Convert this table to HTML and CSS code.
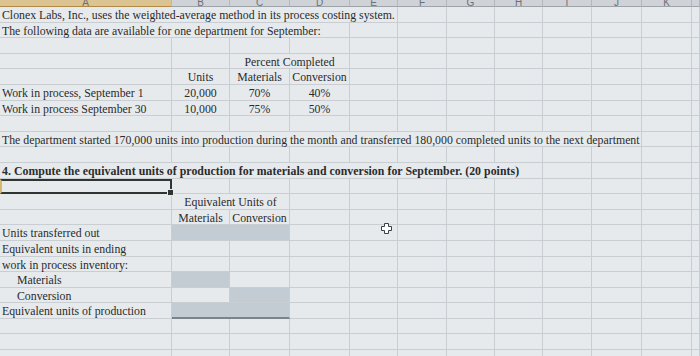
FILE: index.html
```html
<!DOCTYPE html>
<html lang="en">
<head>
    <meta charset="UTF-8">
    <meta content="width=device-width, initial-scale=1.0" name="viewport">
    <title>Process Costing - Equivalent Units</title>
    <link rel="stylesheet" href="styles.css">
</head>
<body>

<div class="sheet">
    <!-- Column headers (cut off at the top of the window) -->
    <div class="head active"><span>A</span></div>
    <div class="head"><span>B</span></div>
    <div class="head"><span>C</span></div>
    <div class="head"><span>D</span></div>
    <div class="head"><span>E</span></div>
    <div class="head"><span>F</span></div>
    <div class="head"><span>G</span></div>
    <div class="head"><span>H</span></div>
    <div class="head"><span>I</span></div>
    <div class="head"><span>J</span></div>
    <div class="head"><span>K</span></div>
    <div class="head"></div>

    <!-- Row 1-2: problem text -->
    <div class="cell span5">Clonex Labs, Inc., uses the weighted-average method in its process costing system.</div>
    <div class="cell"></div><div class="cell"></div><div class="cell"></div><div class="cell"></div><div class="cell"></div><div class="cell"></div><div class="cell"></div>

    <div class="cell span4">The following data are available for one department for September:</div>
    <div class="cell"></div><div class="cell"></div><div class="cell"></div><div class="cell"></div><div class="cell"></div><div class="cell"></div><div class="cell"></div><div class="cell"></div>

    <div class="cell"></div><div class="cell"></div><div class="cell"></div><div class="cell"></div><div class="cell"></div><div class="cell"></div><div class="cell"></div><div class="cell"></div><div class="cell"></div><div class="cell"></div><div class="cell"></div><div class="cell"></div>

    <!-- Data table -->
    <div class="cell"></div>
    <div class="cell"></div>
    <div class="cell span2 center">Percent Completed</div>
    <div class="cell"></div><div class="cell"></div><div class="cell"></div><div class="cell"></div><div class="cell"></div><div class="cell"></div><div class="cell"></div><div class="cell"></div>

    <div class="cell"></div>
    <div class="cell center">Units</div>
    <div class="cell center">Materials</div>
    <div class="cell center">Conversion</div>
    <div class="cell"></div><div class="cell"></div><div class="cell"></div><div class="cell"></div><div class="cell"></div><div class="cell"></div><div class="cell"></div><div class="cell"></div>

    <div class="cell">Work in process, September 1</div>
    <div class="cell center">20,000</div>
    <div class="cell center">70%</div>
    <div class="cell center">40%</div>
    <div class="cell"></div><div class="cell"></div><div class="cell"></div><div class="cell"></div><div class="cell"></div><div class="cell"></div><div class="cell"></div><div class="cell"></div>

    <div class="cell">Work in process September 30</div>
    <div class="cell center">10,000</div>
    <div class="cell center">75%</div>
    <div class="cell center">50%</div>
    <div class="cell"></div><div class="cell"></div><div class="cell"></div><div class="cell"></div><div class="cell"></div><div class="cell"></div><div class="cell"></div><div class="cell"></div>

    <div class="cell"></div><div class="cell"></div><div class="cell"></div><div class="cell"></div><div class="cell"></div><div class="cell"></div><div class="cell"></div><div class="cell"></div><div class="cell"></div><div class="cell"></div><div class="cell"></div><div class="cell"></div>

    <div class="cell span10">The department started 170,000 units into production during the month and transferred 180,000 completed units to the next department</div>
    <div class="cell"></div><div class="cell"></div>

    <div class="cell"></div><div class="cell"></div><div class="cell"></div><div class="cell"></div><div class="cell"></div><div class="cell"></div><div class="cell"></div><div class="cell"></div><div class="cell"></div><div class="cell"></div><div class="cell"></div><div class="cell"></div>

    <!-- Question -->
    <div class="cell span8 bold">4. Compute the equivalent units of production for materials and conversion for September. (20 points)</div>
    <div class="cell"></div><div class="cell"></div><div class="cell"></div><div class="cell"></div>

    <div class="cell selected"></div>
    <div class="cell"></div><div class="cell"></div><div class="cell"></div><div class="cell"></div><div class="cell"></div><div class="cell"></div><div class="cell"></div><div class="cell"></div><div class="cell"></div><div class="cell"></div><div class="cell"></div>

    <!-- Answer table -->
    <div class="cell"></div>
    <div class="cell span2 center">Equivalent Units of</div>
    <div class="cell"></div><div class="cell"></div><div class="cell"></div><div class="cell"></div><div class="cell"></div><div class="cell"></div><div class="cell"></div><div class="cell"></div><div class="cell"></div>

    <div class="cell"></div>
    <div class="cell center">Materials</div>
    <div class="cell center">Conversion</div>
    <div class="cell"></div><div class="cell"></div><div class="cell"></div><div class="cell"></div><div class="cell"></div><div class="cell"></div><div class="cell"></div><div class="cell"></div><div class="cell"></div>

    <div class="cell">Units transferred out</div>
    <div class="cell span2 fill"></div>
    <div class="cell"></div><div class="cell"></div><div class="cell"></div><div class="cell"></div><div class="cell"></div><div class="cell"></div><div class="cell"></div><div class="cell"></div><div class="cell"></div>

    <div class="cell">Equivalent units in ending</div>
    <div class="cell"></div><div class="cell"></div><div class="cell"></div><div class="cell"></div><div class="cell"></div><div class="cell"></div><div class="cell"></div><div class="cell"></div><div class="cell"></div><div class="cell"></div><div class="cell"></div>

    <div class="cell">work in process inventory:</div>
    <div class="cell"></div><div class="cell"></div><div class="cell"></div><div class="cell"></div><div class="cell"></div><div class="cell"></div><div class="cell"></div><div class="cell"></div><div class="cell"></div><div class="cell"></div><div class="cell"></div>

    <div class="cell indent">Materials</div>
    <div class="cell fill"></div>
    <div class="cell"></div>
    <div class="cell"></div><div class="cell"></div><div class="cell"></div><div class="cell"></div><div class="cell"></div><div class="cell"></div><div class="cell"></div><div class="cell"></div><div class="cell"></div>

    <div class="cell indent">Conversion</div>
    <div class="cell"></div>
    <div class="cell fill"></div>
    <div class="cell"></div><div class="cell"></div><div class="cell"></div><div class="cell"></div><div class="cell"></div><div class="cell"></div><div class="cell"></div><div class="cell"></div><div class="cell"></div>

    <div class="cell">Equivalent units of production</div>
    <div class="cell span2 fill total"></div>
    <div class="cell"></div><div class="cell"></div><div class="cell"></div><div class="cell"></div><div class="cell"></div><div class="cell"></div><div class="cell"></div><div class="cell"></div><div class="cell"></div>

    <div class="cell"></div><div class="cell"></div><div class="cell"></div><div class="cell"></div><div class="cell"></div><div class="cell"></div><div class="cell"></div><div class="cell"></div><div class="cell"></div><div class="cell"></div><div class="cell"></div><div class="cell"></div>
    <div class="cell"></div><div class="cell"></div><div class="cell"></div><div class="cell"></div><div class="cell"></div><div class="cell"></div><div class="cell"></div><div class="cell"></div><div class="cell"></div><div class="cell"></div><div class="cell"></div><div class="cell"></div>
    <div class="cell"></div><div class="cell"></div><div class="cell"></div><div class="cell"></div><div class="cell"></div><div class="cell"></div><div class="cell"></div><div class="cell"></div><div class="cell"></div><div class="cell"></div><div class="cell"></div><div class="cell"></div>

    <!-- Mouse pointer -->
    <svg class="pointer" width="11" height="11" viewBox="0 0 11 11">
        <path d="M3.5 0.5h4v3h3v4h-3v3h-4v-3h-3v-4h3z" fill="#fff" stroke="#3a3f44" stroke-width="1"/>
    </svg>
</div>

</body>
</html>
```

FILE: styles.css
```css
body {
    margin: 0;
    background-color: #e6eaed;
    font-family: "Liberation Serif", "Times New Roman", serif;
    color: #2b2b2b;
    overflow: hidden;
}
.sheet {
    position: relative;
    display: grid;
    grid-template-columns: 172px 58px 60px 60px 48px 49px 48px 48px 49px 50px 50px 8px;
    grid-template-rows: 7px;
    grid-auto-rows: 15.6px;
    font-size: 11.8px;
}
.head {
    display: flex;
    align-items: flex-end;
    justify-content: center;
    overflow: hidden;
    background-color: #cfd3d7;
    border-right: 1px solid #b2b8bd;
    border-bottom: 1px solid #9ca3a9;
    box-sizing: border-box;
    font-family: "Liberation Sans", Arial, sans-serif;
    font-size: 10px;
    color: #6a7077;
}
.head span {
    line-height: 10px;
    margin-bottom: -2px;
}
.head.active {
    background-color: #dcc392;
    border-bottom-color: #b08a45;
}
.cell {
    border-right: 1px solid #c9ced3;
    border-bottom: 1px solid #c9ced3;
    box-sizing: border-box;
    padding: 2px 2px 0;
    line-height: 13px;
    white-space: nowrap;
}
.center {
    text-align: center;
}
.indent {
    padding-left: 17px;
}
.bold {
    font-weight: bold;
    letter-spacing: 0.05px;
}
.span2 { grid-column: span 2; }
.span4 { grid-column: span 4; }
.span5 { grid-column: span 5; }
.span8 { grid-column: span 8; }
.span10 { grid-column: span 10; }
.fill {
    background-color: #c3cbd3;
}
.total {
    border-bottom: 2px solid #7b848c;
}
.selected {
    position: relative;
    border: 2px solid #2e3532;
    border-left-color: #d8b86e;
}
.selected::after {
    content: "";
    position: absolute;
    right: -4px;
    bottom: -4px;
    width: 5px;
    height: 5px;
    background-color: #2e3532;
    border: 1px solid #e6eaed;
}
.pointer {
    position: absolute;
    left: 381px;
    top: 223px;
}
```
